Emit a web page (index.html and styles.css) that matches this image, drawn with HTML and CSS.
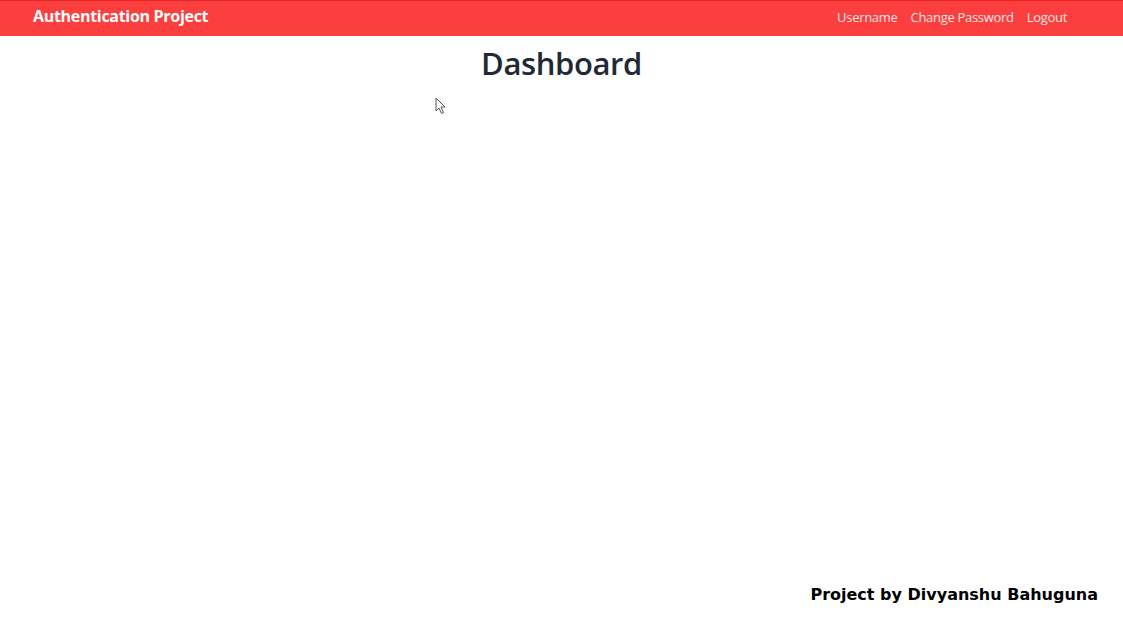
FILE: index.html
```html
<!DOCTYPE html>
<html lang="en">
<head>
<meta charset="utf-8">
<title>Dashboard</title>
<link rel="stylesheet" href="styles.css">
</head>
<body>
<nav class="navbar">
  <a class="brand" href="#">Authentication Project</a>
  <ul class="nav-links">
    <li><a href="#">Username</a></li>
    <li><a href="#">Change Password</a></li>
    <li><a href="#">Logout</a></li>
  </ul>
</nav>
<main class="content">
  <h1 class="title">Dashboard</h1>
</main>
<footer class="footer">Project by Divyanshu Bahuguna</footer>
<svg class="cursor" width="12" height="18" viewBox="0 0 12 18"><path d="M1 1 L1 14 L4 11 L6.5 16.5 L8.5 15.5 L6 10 L10 10 Z" fill="#fff" stroke="#555" stroke-width="1" stroke-linejoin="round"/></svg>
</body>
</html>
```
FILE: styles.css
```css
* { box-sizing: border-box; }
html, body { height: 100%; }
body {
  margin: 0;
  font-family: "Open Sans", "Noto Sans", sans-serif;
  background: #fff;
  display: flex;
  flex-direction: column;
  position: relative;
}
.navbar {
  height: 36px;
  background: #fb3f3f;
  border-top: 1px solid #e8262a;
  display: flex;
  align-items: center;
  justify-content: space-between;
  padding: 0 56px 5px 33px;
}
.brand {
  color: #fff;
  font-weight: 700;
  font-size: 16px;
  line-height: 20px;
  text-decoration: none;
  letter-spacing: -0.3px;
}
.nav-links {
  list-style: none;
  margin: 0;
  padding: 0;
  display: flex;
  gap: 13px;
  line-height: 20px;
}
.nav-links a {
  color: rgba(255,255,255,0.88);
  text-decoration: none;
  font-size: 13px;
  letter-spacing: -0.3px;
}
.content {
  flex: 1;
  text-align: center;
}
.title {
  margin: 5px 0 0;
  font-size: 31px;
  line-height: 44px;
  font-weight: 600;
  color: #212934;
  letter-spacing: -0.4px;
}
.footer {
  text-align: right;
  padding: 0 25px 20px 0;
  font-family: "DejaVu Sans", Verdana, sans-serif;
  font-weight: 700;
  font-size: 16px;
  color: #000;
}
.cursor {
  position: absolute;
  left: 435px;
  top: 97px;
}
```
